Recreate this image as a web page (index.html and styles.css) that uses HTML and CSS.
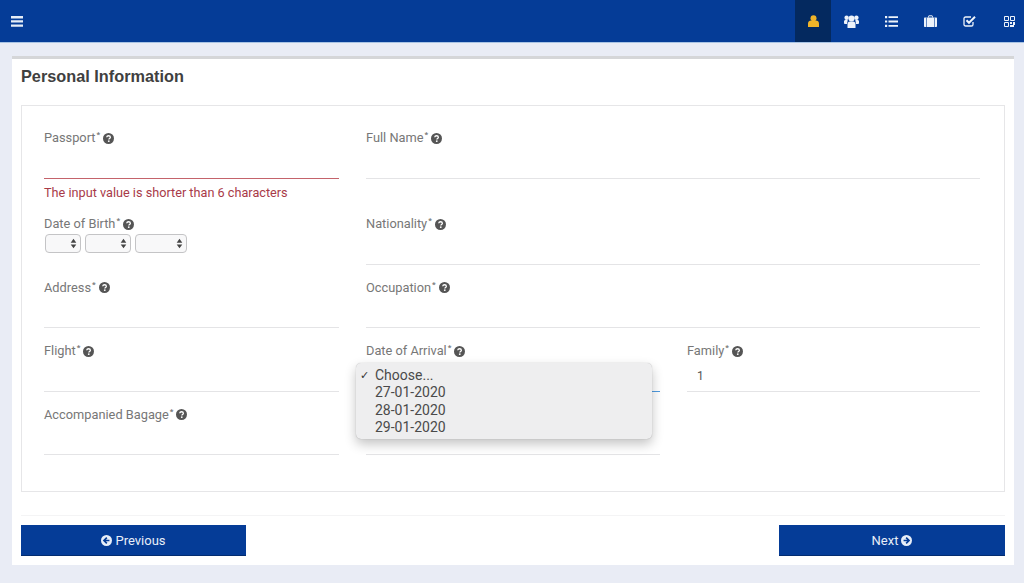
FILE: index.html
```html
<!DOCTYPE html>
<html lang="en">
<head>
<meta charset="utf-8">
<title>Personal Information</title>
<link rel="stylesheet" href="styles.css">
</head>
<body>
<svg class="defs" width="0" height="0" aria-hidden="true">
  <symbol id="q" viewBox="0 0 16 16">
    <circle cx="8" cy="8" r="8" fill="currentColor"/>
    <path d="M5.4 6.2C5.6 4.7 6.7 4 8.1 4c1.5 0 2.6.9 2.6 2.2 0 1.9-2.2 1.9-2.2 3.4" fill="none" stroke="#fff" stroke-width="1.9"/>
    <rect x="7.2" y="10.8" width="2.3" height="2.2" fill="#fff"/>
  </symbol>
  <symbol id="spin" viewBox="0 0 8 12">
    <path d="M4 0.5 7.2 5H.8zM4 11.5 .8 7h6.4z" fill="currentColor"/>
  </symbol>
</svg>

<header class="topbar">
  <button class="menu-btn" aria-label="Menu">
    <svg width="12" height="11" viewBox="0 0 12 11"><path d="M0 0h12v2.4H0zM0 4.2h12v2.4H0zM0 8.4h12v2.4H0z" fill="currentColor"/></svg>
  </button>
  <nav class="tabs">
    <a class="tab active"><svg width="11" height="12" viewBox="0 0 11 12"><circle cx="5.5" cy="3.2" r="3" fill="currentColor"/><path d="M0 12V8.6C0 6.9 1.4 5.6 3 5.6h5c1.6 0 3 1.3 3 3V12z" fill="currentColor"/></svg></a>
    <a class="tab"><svg width="15" height="13" viewBox="0 0 15 13"><circle cx="7.5" cy="3.6" r="3" fill="currentColor"/><circle cx="2.6" cy="2.8" r="2.2" fill="currentColor"/><circle cx="12.4" cy="2.8" r="2.2" fill="currentColor"/><path d="M0 8V6.400C0 5.600.7 5 1.500 5h2.200L3 9H.8C.3 9 0 8.600 0 8zM15 8V6.400C15 5.600 14.300 5 13.500 5h-2.200L12 9h2.200c.5 0 .8-.4.8-1z" fill="currentColor"/><path d="M3.500 13V9c0-1.500 1-2.400 2.300-2.400h3.400c1.300 0 2.300.9 2.300 2.400v4z" fill="currentColor"/></svg></a>
    <a class="tab"><svg width="13" height="11" viewBox="0 0 13 11"><path d="M0 0h2.200v2.200H0zM3.500.2H13V2H3.500zM0 4.400h2.200v2.200H0zM3.500 4.600H13v1.800H3.500zM0 8.800h2.200V11H0zM3.500 9H13v1.800H3.500z" fill="currentColor"/></svg></a>
    <a class="tab"><svg width="13" height="12" viewBox="0 0 13 12"><path d="M4.500 2.500V1.300c0-.3.2-.5.5-.5h3c.3 0 .5.2.5.5v1.200" fill="none" stroke="currentColor"/><path d="M1 2.500h11c.6 0 1 .4 1 1V11c0 .6-.4 1-1 1H1c-.6 0-1-.4-1-1V3.500c0-.6.4-1 1-1z" fill="currentColor"/><path d="M2.500 2.500V12M10.500 2.500V12" stroke="#053c97" stroke-width=".6"/></svg></a>
    <a class="tab"><svg width="13" height="12" viewBox="0 0 13 12"><path d="M10 7v2.400c0 .9-.7 1.600-1.600 1.600H2.600C1.700 11 1 10.300 1 9.400V3.600C1 2.700 1.700 2 2.600 2H8" fill="none" stroke="currentColor" stroke-width="1.300"/><path d="M3.500 5.200 6 7.800 12 1.800" fill="none" stroke="currentColor" stroke-width="2"/></svg></a>
    <a class="tab"><svg width="11" height="11" viewBox="0 0 11 11"><path d="M.5.500h4v4h-4zM6.500.500h4v4h-4zM.5 6.500h4v4h-4z" fill="none" stroke="currentColor"/><path d="M6 6h2v2H6zM9 6h2v3H9zM6 9h4v2H6z" fill="currentColor"/></svg></a>
  </nav>
</header>

<main class="card">
  <h1 class="title">Personal Information</h1>
  <section class="box">
    <div class="grid">
      <div class="field">
        <label class="label">Passport<sup>*</sup><svg class="help"><use href="#q"/></svg></label>
        <div class="control invalid"></div>
        <p class="error">The input value is shorter than 6 characters</p>
      </div>
      <div class="field span2">
        <label class="label">Full Name<sup>*</sup><svg class="help"><use href="#q"/></svg></label>
        <div class="control"></div>
      </div>

      <div class="field">
        <label class="label">Date of Birth<sup>*</sup><svg class="help"><use href="#q"/></svg></label>
        <div class="dob">
          <div class="mini day"><svg class="spin"><use href="#spin"/></svg></div>
          <div class="mini month"><svg class="spin"><use href="#spin"/></svg></div>
          <div class="mini year"><svg class="spin"><use href="#spin"/></svg></div>
        </div>
      </div>
      <div class="field span2">
        <label class="label">Nationality<sup>*</sup><svg class="help"><use href="#q"/></svg></label>
        <div class="control"></div>
      </div>

      <div class="field">
        <label class="label">Address<sup>*</sup><svg class="help"><use href="#q"/></svg></label>
        <div class="control"></div>
      </div>
      <div class="field span2">
        <label class="label">Occupation<sup>*</sup><svg class="help"><use href="#q"/></svg></label>
        <div class="control"></div>
      </div>

      <div class="field">
        <label class="label">Flight<sup>*</sup><svg class="help"><use href="#q"/></svg></label>
        <div class="control"></div>
      </div>
      <div class="field arrival">
        <label class="label">Date of Arrival<sup>*</sup><svg class="help"><use href="#q"/></svg></label>
        <div class="control focus"></div>
        <ul class="dropdown">
          <li class="selected">Choose...</li>
          <li>27-01-2020</li>
          <li>28-01-2020</li>
          <li>29-01-2020</li>
        </ul>
      </div>
      <div class="field">
        <label class="label">Family<sup>*</sup><svg class="help"><use href="#q"/></svg></label>
        <div class="control value">1</div>
      </div>

      <div class="field">
        <label class="label">Accompanied Bagage<sup>*</sup><svg class="help"><use href="#q"/></svg></label>
        <div class="control"></div>
      </div>
      <div class="field">
        <div class="label"></div>
        <div class="control"></div>
      </div>
    </div>
  </section>
  <footer class="actions">
    <button class="btn prev"><svg class="btn-icon" viewBox="0 0 12 12"><circle cx="6" cy="6" r="6" fill="currentColor"/><path d="M6.400 2.800 3.200 6l3.200 3.200M3.600 6h5.600" fill="none" stroke="#053c97" stroke-width="1.800"/></svg>Previous</button>
    <button class="btn next">Next<svg class="btn-icon" viewBox="0 0 12 12"><circle cx="6" cy="6" r="6" fill="currentColor"/><path d="M5.600 2.800 8.800 6 5.600 9.200M8.400 6H2.800" fill="none" stroke="#053c97" stroke-width="1.800"/></svg></button>
  </footer>
</main>
</body>
</html>
```
FILE: styles.css
```css
* { box-sizing: border-box; }
html, body { margin: 0; height: 100%; overflow: hidden; }
body {
  background: #e9ecf5;
  font-family: Roboto, "Liberation Sans", sans-serif;
  color: #555;
}
.defs { position: absolute; }

.topbar {
  height: 43px;
  background: #053c97;
  border-bottom: 1px solid #a9c4e4;
  display: flex;
  justify-content: space-between;
  color: #fff;
  overflow: hidden;
}
.menu-btn {
  width: 34px;
  padding: 0;
  border: 0;
  background: none;
  color: #e6edf7;
  display: flex;
  align-items: center;
  justify-content: center;
}
.tabs { display: flex; margin-right: -5px; }
.tab {
  width: 39.4px;
  display: flex;
  align-items: center;
  justify-content: center;
  color: #eef3fa;
}
.tab.active {
  width: 36px;
  margin-right: 1px;
  background: #04295f;
  color: #f0b429;
}

.card {
  margin: 13px 10px 0 12px;
  height: 509px;
  background: #fff;
  border-top: 3px solid #d5d6d8;
  padding: 0 9px;
  display: flex;
  flex-direction: column;
}
.title {
  margin: 0;
  height: 46px;
  padding-top: 7px;
  font: bold 16.300px/20px "Liberation Sans", sans-serif;
  color: #404040;
}
.box {
  height: 387px;
  border: 1px solid #e6e6e8;
  padding: 21px 24px 0 22px;
}
.grid {
  display: grid;
  grid-template-columns: 295px 294px 293px;
  column-gap: 27px;
  grid-auto-rows: 63.500px;
  grid-template-rows: 86px;
}
.field { position: relative; min-width: 0; }
.span2 { grid-column: span 2; }
.label {
  display: flex;
  align-items: center;
  height: 20px;
  padding-top: 2px;
  font-size: 12.800px;
  line-height: 18px;
  color: #777;
  white-space: nowrap;
}
.label sup {
  font-size: 8px;
  font-weight: 700;
  line-height: 1;
  align-self: flex-start;
  margin: 2px 0 0 1px;
}
.help {
  width: 11px;
  height: 11px;
  margin-left: 3px;
  color: #555;
}
.control {
  height: 31.500px;
  border-bottom: 1px solid #e4e4e6;
  font-size: 13px;
  line-height: 17px;
  color: #555;
}
.control.invalid { border-bottom-color: #c4636b; }
.control.focus { border-bottom-color: #4f9be0; }
.control.value { padding: 8px 0 0 10px; font-size: 12px; }
.error {
  margin: 5px 0 0;
  font-size: 12.700px;
  line-height: 17px;
  color: #a83a48;
}

.dob { display: flex; gap: 2px; margin: 1px 0 0 1px; }
.mini {
  height: 19px;
  border: 1px solid #c4c4c6;
  border-radius: 4px;
  background: #f8f8f9;
  display: flex;
  align-items: center;
  justify-content: flex-end;
  padding-right: 3px;
  color: #444;
}
.day { width: 36px; margin-right: 2px; }
.month { width: 46px; margin-right: 2px; }
.year { width: 52px; }
.spin { width: 7px; height: 11px; }

.dropdown {
  position: absolute;
  top: 23px;
  left: -10px;
  width: 296px;
  height: 76px;
  margin: 0;
  padding: 4px 0 0 19px;
  list-style: none;
  background: #eeeeef;
  border-radius: 5px;
  box-shadow: 0 5px 12px rgba(0, 0, 0, .24), 0 0 1px rgba(0, 0, 0, .3);
  font-size: 14px;
  line-height: 17.300px;
  color: #4a4a4a;
  z-index: 2;
}
.dropdown .selected { position: relative; }
.dropdown .selected::before {
  content: "✓";
  position: absolute;
  left: -15px;
  font: bold 11px/17px "DejaVu Sans", sans-serif;
  color: #333;
}

.actions {
  margin-top: 23px;
  border-top: 1px solid #f4f4f5;
  padding-top: 9px;
  display: flex;
  justify-content: space-between;
}
.btn {
  height: 31px;
  padding: 1px 0 0;
  border: 0;
  border-bottom: 1px solid #032c70;
  background: #053c97;
  color: #e8eef8;
  font: 400 13px/30px Roboto, "Liberation Sans", sans-serif;
  display: flex;
  align-items: center;
  justify-content: center;
  gap: 3px;
}
.prev { width: 225px; }
.next { width: 226px; }
.btn-icon { width: 11px; height: 11px; }
```
